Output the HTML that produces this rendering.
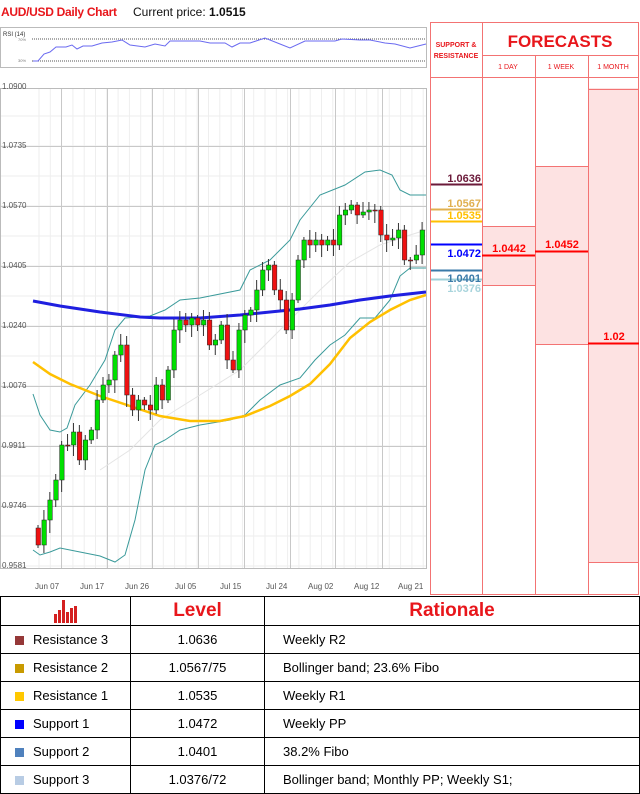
<!DOCTYPE html>
<html><head><meta charset="utf-8"><style>
*{margin:0;padding:0;box-sizing:border-box}
body{width:640px;height:792px;background:#fff;font-family:"Liberation Sans",sans-serif;position:relative;overflow:hidden}
.t{position:absolute;white-space:nowrap}
table{position:absolute;left:0;top:596px;width:640px;border-collapse:collapse;font-size:13px;table-layout:fixed}
td{border:1px solid #000;height:28px;padding:0;line-height:14px;overflow:hidden;white-space:nowrap}
td.c1{width:130px;padding-left:14px}
td.c2{width:134px;text-align:center}
td.c3{padding-left:18px}
.sq{display:inline-block;width:9px;height:9px;margin-right:9px;vertical-align:-1px}
</style></head><body>
<div class="t" style="left:1px;top:5px;font-size:12px;font-weight:bold;color:#e8161b;letter-spacing:-0.3px">AUD/USD Daily Chart</div>
<div class="t" style="left:133px;top:5px;font-size:12px;color:#111">Current price: <b>1.0515</b></div>
<svg width="640" height="600" style="position:absolute;left:0;top:0" id="s" font-family="Liberation Sans">
<rect x="0.5" y="27.5" width="426" height="40" fill="#fff" stroke="#bbb"/>
<text x="3" y="36" font-size="6" fill="#333">RSI (14)</text>
<text x="18" y="41" font-size="4" fill="#777">70%</text>
<text x="18" y="62" font-size="4" fill="#777">30%</text>
<line x1="32" y1="39" x2="426" y2="39" stroke="#555" stroke-dasharray="1,1"/>
<line x1="32" y1="61" x2="426" y2="61" stroke="#555" stroke-dasharray="1,1"/>
<polyline fill="none" stroke="#6a6af0" stroke-width="1" points="33,61 38,61 44,54 50,52 56,47 66,47 72,45 77,49 83,46 92,46 102,43 112,42 122,40 130,45 145,47 155,44 165,46 170,41 200,41 210,43 225,43 232,47 240,43 250,43 265,38 280,44 290,48 305,41 335,41 342,39 360,40 370,40 385,43 395,44 410,48 418,46 426,44"/>
<g id="grid"></g>
<g id="chart"></g>
<rect x="0.5" y="88.5" width="426" height="480" fill="none" stroke="#bbb"/>
<g font-size="8" fill="#555">
<text x="2" y="89">1.0900</text><text x="2" y="148">1.0735</text><text x="2" y="208">1.0570</text><text x="2" y="268">1.0405</text><text x="2" y="328">1.0240</text><text x="2" y="388">1.0076</text><text x="2" y="448">0.9911</text><text x="2" y="508">0.9746</text><text x="2" y="568">0.9581</text>
<text x="35" y="589">Jun 07</text><text x="80" y="589">Jun 17</text><text x="125" y="589">Jun 26</text><text x="175" y="589">Jul 05</text><text x="220" y="589">Jul 15</text><text x="266" y="589">Jul 24</text><text x="308" y="589">Aug 02</text><text x="354" y="589">Aug 12</text><text x="398" y="589">Aug 21</text>
</g>
<rect x="535" y="166" width="53" height="178" fill="#fde2e2"/>
<rect x="482" y="226" width="53" height="59" fill="#fde2e2"/>
<rect x="588" y="88" width="50" height="474" fill="#fde2e2"/>
<g stroke="#f37373" stroke-width="1" fill="none">
<rect x="430.5" y="22.5" width="208" height="572"/>
<line x1="482.5" y1="22" x2="482.5" y2="595"/>
<line x1="535.5" y1="55" x2="535.5" y2="595"/>
<line x1="588.5" y1="55" x2="588.5" y2="595"/>
<line x1="482" y1="55.5" x2="639" y2="55.5"/>
<line x1="430" y1="77.5" x2="639" y2="77.5"/>
<line x1="588" y1="89.5" x2="639" y2="89.5"/>
<line x1="482" y1="226.5" x2="535" y2="226.5"/><line x1="482" y1="285.5" x2="535" y2="285.5"/>
<line x1="535" y1="166.5" x2="588" y2="166.5"/><line x1="535" y1="344.5" x2="588" y2="344.5"/>
<line x1="588" y1="562.5" x2="639" y2="562.5"/>
</g>
<text x="456" y="47" font-size="7" font-weight="bold" fill="#e8161b" text-anchor="middle">SUPPORT &amp;</text>
<text x="456" y="58" font-size="7" font-weight="bold" fill="#e8161b" text-anchor="middle">RESISTANCE</text>
<text x="560" y="47" font-size="17" font-weight="bold" fill="#e8161b" text-anchor="middle">FORECASTS</text>
<text x="508" y="69" font-size="7" fill="#e8161b" text-anchor="middle">1 DAY</text>
<text x="561" y="69" font-size="7" fill="#e8161b" text-anchor="middle">1 WEEK</text>
<text x="613" y="69" font-size="7" fill="#e8161b" text-anchor="middle">1 MONTH</text>
<g stroke-width="2">
<line x1="431" y1="184.5" x2="482" y2="184.5" stroke="#6b1a3a"/>
<line x1="431" y1="209.5" x2="482" y2="209.5" stroke="#e0b050"/>
<line x1="431" y1="221.5" x2="482" y2="221.5" stroke="#ffc000"/>
<line x1="431" y1="244.5" x2="482" y2="244.5" stroke="#0000ff"/>
<line x1="431" y1="270.5" x2="482" y2="270.5" stroke="#3a7aa8"/>
<line x1="431" y1="279.5" x2="482" y2="279.5" stroke="#9fd0d8"/>
<line x1="482" y1="255.5" x2="535" y2="255.5" stroke="#ff0000"/>
<line x1="535" y1="251.5" x2="588" y2="251.5" stroke="#ff0000"/>
<line x1="588" y1="343.5" x2="639" y2="343.5" stroke="#ff0000"/>
</g>
<g font-size="11" font-weight="bold" text-anchor="end">
<text x="481" y="182" fill="#6b1a3a">1.0636</text>
<text x="481" y="207" fill="#e0b050">1.0567</text>
<text x="481" y="219" fill="#ffc000">1.0535</text>
<text x="481" y="257" fill="#0000ff">1.0472</text>
<text x="481" y="282" fill="#3a7aa8">1.0401</text>
<text x="481" y="292" fill="#a8d4dc">1.0376</text>
</g>
<g font-size="11" font-weight="bold" fill="#ff0000" text-anchor="middle">
<text x="509" y="252">1.0442</text><text x="562" y="248">1.0452</text><text x="614" y="340">1.02</text>
</g>
</svg>
<table>
<tr><td class="c1" style="text-align:center;padding:0;height:29px"><svg width="26" height="26" viewBox="0 0 26 26" style="vertical-align:middle"><g fill="#d42020"><rect x="1" y="16" width="3" height="9"/><rect x="5" y="12" width="3" height="13"/><rect x="9" y="2" width="3" height="23"/><rect x="13" y="14" width="3" height="11"/><rect x="17" y="10" width="3" height="15"/><rect x="21" y="8" width="3" height="17"/></g></svg></td>
<td class="c2" style="font-size:19px;font-weight:bold;color:#e8161b;line-height:20px">Level</td>
<td style="font-size:19px;font-weight:bold;color:#e8161b;text-align:center;line-height:20px">Rationale</td></tr>
<tr><td class="c1"><span class="sq" style="background:#953838"></span>Resistance 3</td><td class="c2">1.0636</td><td class="c3">Weekly R2</td></tr>
<tr><td class="c1"><span class="sq" style="background:#c89a00"></span>Resistance 2</td><td class="c2">1.0567/75</td><td class="c3">Bollinger band; 23.6% Fibo</td></tr>
<tr><td class="c1"><span class="sq" style="background:#ffc800"></span>Resistance 1</td><td class="c2">1.0535</td><td class="c3">Weekly R1</td></tr>
<tr><td class="c1"><span class="sq" style="background:#0000ff"></span>Support 1</td><td class="c2">1.0472</td><td class="c3">Weekly PP</td></tr>
<tr><td class="c1"><span class="sq" style="background:#4f81bd"></span>Support 2</td><td class="c2">1.0401</td><td class="c3">38.2% Fibo</td></tr>
<tr><td class="c1"><span class="sq" style="background:#b8cce4"></span>Support 3</td><td class="c2">1.0376/72</td><td class="c3">Bollinger band; Monthly PP; Weekly S1;</td></tr>
</table>
<script>
var NS="http://www.w3.org/2000/svg";
function el(p,t,a){var e=document.createElementNS(NS,t);for(var k in a)e.setAttribute(k,a[k]);p.appendChild(e);return e;}
var g=document.getElementById("grid"),c=document.getElementById("chart");
for(var x=39;x<426;x+=11.3)el(g,"line",{x1:x,y1:89,x2:x,y2:568,stroke:"#eee"});
for(var y=116;y<568;y+=30)el(g,"line",{x1:1,y1:y,x2:426,y2:y,stroke:"#eee"});
[61,107,152,198,244,290,335,382].forEach(function(x){el(g,"line",{x1:x+.5,y1:89,x2:x+.5,y2:568,stroke:"#c8c8c8"});});
[146,206,266,326,386,446,506].forEach(function(y){el(g,"line",{x1:1,y1:y+.5,x2:426,y2:y+.5,stroke:"#c8c8c8"});});
function pl(pts,col,w){el(c,"polyline",{points:pts,fill:"none",stroke:col,"stroke-width":w});}
pl("100,470 130,450 160,420 200,395 240,370 280,330 320,290 350,262 380,245 410,235 426,230","#e4e4e4",1);
pl("33,394 40,415 50,430 60,432 67,428 75,405 90,385 105,360 115,330 125,318 150,316 165,310 180,300 200,298 240,290 250,270 270,260 290,240 300,220 320,195 345,185 365,172 380,170 392,175 400,190 410,195 426,195","#3a9a9a",1);
pl("33,550 40,555 50,552 60,548 80,552 100,556 115,562 125,555 135,520 145,470 155,445 165,440 180,430 200,425 230,420 245,415 260,400 280,385 300,378 315,360 330,345 345,335 360,318 375,318 390,300 400,276 410,268 426,268","#3a9a9a",1);
pl("33,301 60,306 100,312 140,317 160,318 200,318 240,315 270,312 300,309 330,305 360,300 390,296 426,292","#1f1fe0",3);
pl("33,362 50,374 70,384 100,396 130,406 160,416 190,421 220,421 245,416 270,406 290,396 310,384 330,364 350,338 370,322 390,310 410,300 426,295","#ffc000",2.5);
var cl=[545,520,500,480,445,445,432,460,440,430,400,385,380,355,345,395,410,400,405,410,385,400,370,330,320,325,318,325,320,345,340,325,360,370,330,315,310,290,270,265,290,300,330,300,260,240,245,240,245,240,245,215,210,205,215,212,210,210,235,240,238,230,260,260,255,230];
var op=528,step=(426-36)/cl.length;
cl.forEach(function(v,i){var x=36+i*step,o=op,h=Math.min(o,v)-3-(i*7%9),l=Math.max(o,v)+3+(i*5%11);
el(c,"line",{x1:x+2,y1:h,x2:x+2,y2:l,stroke:"#333"});
var up=v<o;el(c,"rect",{x:x,y:Math.min(o,v),width:4.5,height:Math.max(1,Math.abs(o-v)),fill:up?"#00e000":"#ee1111",stroke:"#222","stroke-width":0.5});op=v;});
</script>
</body></html>
